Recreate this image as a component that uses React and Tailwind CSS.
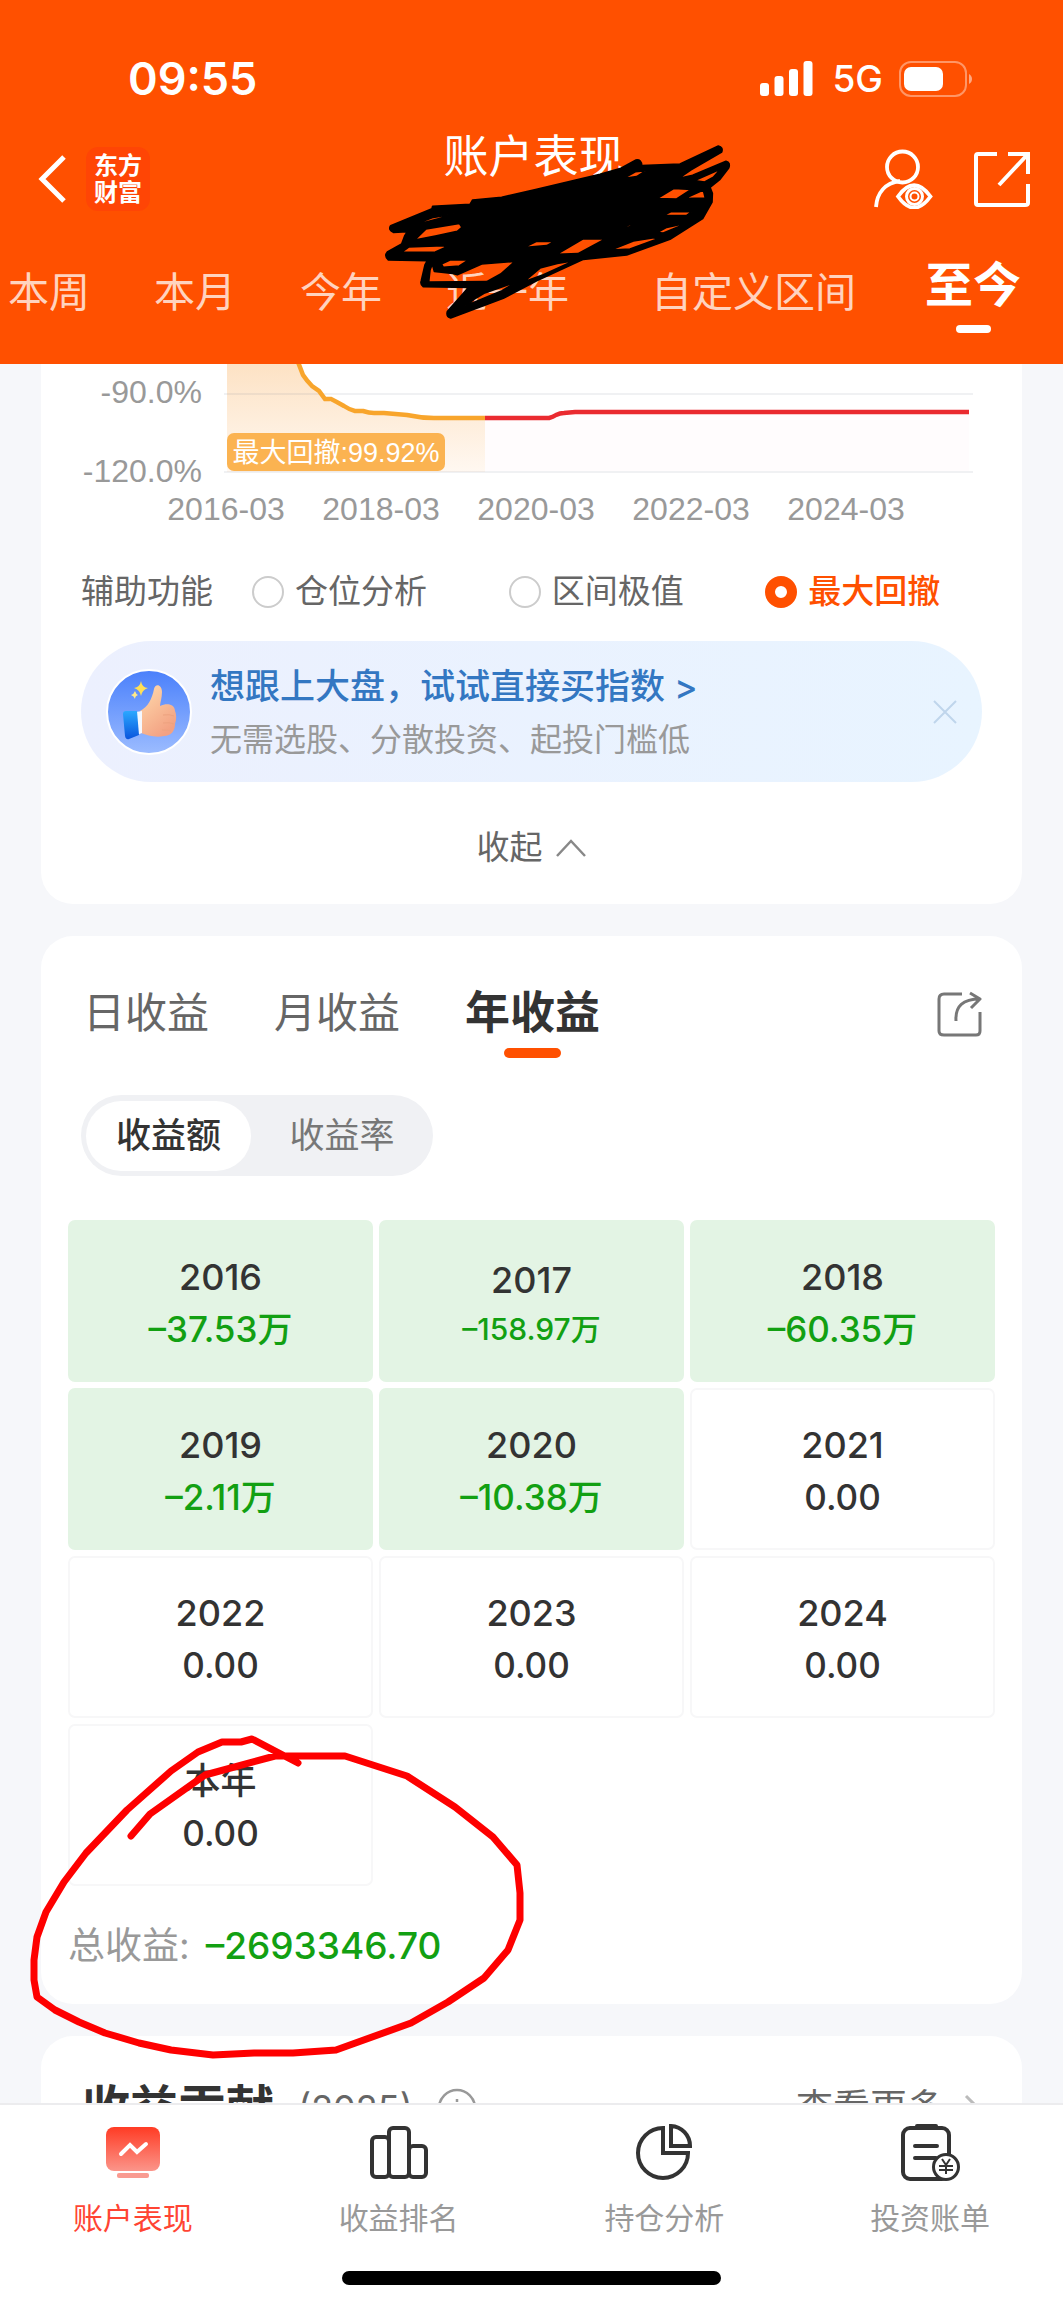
import { useState } from 'react';
import clsx from 'clsx';

const RANGES = [
  { label: '本周', width: 'w-[146px]' },
  { label: '本月', width: 'w-[146px]' },
  { label: '今年', width: 'w-[146px]' },
  { label: '近一年', width: 'w-[187px]' },
  { label: '自定义区间', width: 'w-[305px]' },
  { label: '至今', width: 'w-[134px]' },
];

const HELPERS = ['仓位分析', '区间极值', '最大回撤'];

const YEARS = [
  { year: '2016', value: '–37.53万', loss: true },
  { year: '2017', value: '–158.97万', loss: true, long: true },
  { year: '2018', value: '–60.35万', loss: true },
  { year: '2019', value: '–2.11万', loss: true },
  { year: '2020', value: '–10.38万', loss: true },
  { year: '2021', value: '0.00' },
  { year: '2022', value: '0.00' },
  { year: '2023', value: '0.00' },
  { year: '2024', value: '0.00' },
  { year: '本年', value: '0.00' },
];

function StatusBar() {
  return (
    <div className="flex h-[58px] items-center justify-between pl-[128px] pr-[88px]">
      <span className="text-[45px] font-semibold">09:55</span>
      <div className="flex items-center">
        <svg className="h-9 w-[54px]" viewBox="0 0 54 36" fill="currentColor">
          <rect x="0" y="22" width="9" height="13" rx="3" />
          <rect x="14.500" y="15" width="9" height="20" rx="3" />
          <rect x="29" y="8" width="9" height="27" rx="3" />
          <rect x="43.500" y="0" width="9" height="35" rx="3" />
        </svg>
        <span className="ml-[18px] text-[37px] font-medium">5G</span>
        <svg className="ml-4 h-9 w-[76px]" viewBox="0 0 76 36">
          <rect x="1" y="1" width="66" height="34" rx="11" fill="none" stroke="#fff" strokeOpacity="0.4" strokeWidth="2" />
          <rect x="5" y="6" width="39" height="24" rx="7" fill="#fff" />
          <path d="M70 13c4 2 4 8 0 10z" fill="#fff" fillOpacity="0.5" />
        </svg>
      </div>
    </div>
  );
}

// Black marker over the account name
function Redaction() {
  return (
    <svg
      className="pointer-events-none absolute left-1/2 top-[130px] h-[200px] w-[370px] -translate-x-[162px]"
      viewBox="0 0 1110 600"
      stroke="#000"
      strokeWidth="5"
      strokeLinejoin="round"
    >
      <path
        fillRule="evenodd"
        d="M188 229L300 223L308 210L395 202L500 178L690 133L750 116L798 90Q815 88 815 107L930 102L1045 48Q1060 52 1055 66L962 120L925 146L968 136L1068 94Q1082 98 1076 114L1050 148L1020 172L1027 190L1026 216L998 266L900 328L770 375L640 388L500 452L400 505L242 564Q228 560 232 545L296 472L160 470Q150 464 154 452L165 405L172 392L55 390Q42 378 52 366L95 342L104 318L112 305L70 307Q54 300 62 287L186 236Z
        M122 288L190 262L262 250L208 266Z
        M134 330L168 297L268 280L276 292L262 304L196 318Z
        M94 367L116 351L220 347L228 352L196 366Z
        M214 402L240 390L296 390L268 408L220 412Z
        M187 402L193 424L248 430L262 434L335 402L435 394L392 432L350 455L176 456L180 420Z
        M282 532L312 508L342 490L442 455L396 482L300 522Z
        M460 456L510 414L562 400L612 392L520 434Z
        M460 353L500 334L555 334L530 347Z
        M560 373L638 327L706 327L624 371Z
        M722 360L790 333L852 323L860 328L780 357Z
        M520 286L560 268L542 280Z
        M362 264L368 258L378 258L368 264Z
        M746 293L780 284L804 286L766 293Z
        M826 280L868 275L840 280Z
        M860 206L912 175L964 178L920 207Z
        M942 206L1000 180L1006 204Z
        M878 257L902 245L966 245L950 256Z
        M860 308L890 292L955 278L880 309Z
        M968 234L978 230L970 240Z
        M972 152L1052 117L1030 142L1004 156Z
        M758 146L796 125L828 122L800 140Z"
      />
    </svg>
  );
}

function Header() {
  const [active, setActive] = useState('至今');

  return (
    <header className="relative shrink-0 overflow-hidden bg-[#ff5000] pt-[50px] text-white">
      <StatusBar />

      <div className="mt-[26px] grid h-[90px] grid-cols-[1fr_auto_1fr] items-center pl-9 pr-8">
        <div className="flex items-center">
          <button type="button" aria-label="返回" className="h-12 w-8">
            <svg viewBox="0 0 32 48" fill="none" stroke="currentColor" strokeWidth="5">
              <path d="M28 2L6 24l22 22" />
            </svg>
          </button>
          <div className="ml-[18px] flex h-16 w-16 flex-col items-center justify-center rounded-xl bg-[#ff4505] text-[24px] font-bold leading-[27px]">
            <span>东方</span>
            <span>财富</span>
          </div>
        </div>
        <h1 className="self-start text-[45px] font-normal leading-[46px]">账户表现</h1>
        <div className="flex items-center justify-end gap-10">
          <button type="button" aria-label="账户可见" className="h-[60px] w-[60px]">
            <svg viewBox="0 0 60 60" fill="none" stroke="currentColor" strokeWidth="3.800">
              <circle cx="29.500" cy="18" r="15.500" />
              <path d="M27 32C12 34 4 44 3 58" />
              <path d="M25 47.500Q41 25 57.500 47.500Q41 70 25 47.500Z" />
              <circle cx="41.500" cy="47.500" r="8" strokeWidth="3" />
              <circle cx="41.500" cy="47.500" r="4" strokeWidth="2" />
            </svg>
          </button>
          <button type="button" aria-label="分享" className="h-[58px] w-[58px]">
            <svg viewBox="0 0 58 58" fill="none" stroke="currentColor" strokeWidth="4">
              <path d="M24 4H5q-2 0-2 2v47q0 2 2 2h47q3 0 3-2V34" />
              <path d="M35 4h20v20M55 4L26 35" />
            </svg>
          </button>
        </div>
      </div>

      <nav className="-ml-6 flex h-[140px] items-start pt-[38px]">
        {RANGES.map(({ label, width }) => (
          <button
            key={label}
            type="button"
            onClick={() => setActive(label)}
            className={clsx('flex shrink-0 flex-col items-center whitespace-nowrap', width)}
          >
            {active === label ? (
              <>
                <span className="text-[48px] font-bold leading-[46px]">{label}</span>
                <span className="mt-[17px] h-2 w-[35px] rounded-full bg-white" />
              </>
            ) : (
              <span className="text-[41px] leading-[60px] text-white/75">{label}</span>
            )}
          </button>
        ))}
      </nav>

      <Redaction />
    </header>
  );
}

function DrawdownChart() {
  return (
    <svg className="block w-full font-['Liberation_Sans','Noto_Sans_CJK_SC',sans-serif]" viewBox="0 0 981 178">
      <defs>
        <linearGradient id="drawdown" x1="0" y1="0" x2="0" y2="1">
          <stop offset="0" stopColor="#fde2c4" />
          <stop offset="1" stopColor="#fff8f1" />
        </linearGradient>
      </defs>
      <path d="M186 0H257L262 12L271 22L283 35L311 46L366 51L393 54H444V108H186Z" fill="url(#drawdown)" />
      <path d="M444 54H508L534 48H928V107H444Z" fill="#fffcfd" />
      <path d="M183 30H932M183 108H932" stroke="#8088a0" strokeOpacity="0.12" strokeWidth="2" />
      <path
        d="M257 -2L262 11Q266 17 271 22L278 27L284 35H290Q296 38 303 42Q309 46 314 47L322 47Q328 49 333 49H343L366 51Q380 54 393 54H444"
        fill="none"
        stroke="#f8a52c"
        strokeWidth="4.500"
      />
      <path d="M444 54H508Q512 53 515 51Q519 49 523 49L534 48H928" fill="none" stroke="#ea2b30" strokeWidth="4.500" />
      <rect x="186" y="69" width="218" height="38" rx="7" fill="#fbb351" />
      <text x="295" y="98" fontSize="27" fill="#fff" textAnchor="middle">最大回撤:99.92%</text>
      <g fontSize="32" fill="#999">
        <text x="161" y="39" textAnchor="end">-90.0%</text>
        <text x="161" y="118" textAnchor="end">-120.0%</text>
        <text x="185" y="156" textAnchor="middle">2016-03</text>
        <text x="340" y="156" textAnchor="middle">2018-03</text>
        <text x="495" y="156" textAnchor="middle">2020-03</text>
        <text x="650" y="156" textAnchor="middle">2022-03</text>
        <text x="805" y="156" textAnchor="middle">2024-03</text>
      </g>
    </svg>
  );
}

function ThumbIcon() {
  return (
    <svg className="h-[86px] w-[86px] shrink-0" viewBox="0 0 86 86">
      <defs>
        <linearGradient id="disc" x1="0" y1="0" x2="0" y2="1">
          <stop offset="0" stopColor="#4a80fb" />
          <stop offset="1" stopColor="#9cbcff" />
        </linearGradient>
        <linearGradient id="hand" x1="0" y1="0" x2="0.600" y2="1">
          <stop offset="0" stopColor="#ffdcae" />
          <stop offset="1" stopColor="#f3a182" />
        </linearGradient>
        <linearGradient id="cuff" x1="0" y1="0" x2="0" y2="1">
          <stop offset="0" stopColor="#2ba8ff" />
          <stop offset="1" stopColor="#0a55dd" />
        </linearGradient>
      </defs>
      <circle cx="43" cy="43" r="42" fill="url(#disc)" stroke="#fff" strokeWidth="2" />
      <path
        d="M34 42C42 38 46 30 48 20C49 14 56 15 56 23C56 29 54 34 54 37C62 33 69 36 69 42C71 47 70 52 69 55C69 62 65 67 58 67C49 69 41 66 35 64Z"
        fill="url(#hand)"
      />
      <path d="M57 46q7-1 11 1M57 54q7-1 11 1M56 61q6 0 9 1" stroke="#eda27f" strokeWidth="1" fill="none" />
      <path d="M30 43l6-1 0 22-5 2z" fill="#f4f8ff" />
      <path d="M17 45q0-3 3-3l11 0 2 24-10 4q-3 1-4-3z" fill="url(#cuff)" />
      <path d="M35 12q1 7 7 7-6 2-7 8-1-6-7-8 6-1 7-7z" fill="#ffdf55" />
      <path d="M29 22q1 3 3 4-3 1-3 4-1-3-4-4 3-1 4-4z" fill="#ffe98a" />
    </svg>
  );
}

function ChartCard() {
  const [helper, setHelper] = useState('最大回撤');

  return (
    <section className="shrink-0 rounded-b-[32px] bg-white">
      <DrawdownChart />

      <fieldset className="flex h-[99px] items-center pl-10 text-[33px] text-[#666]">
        <span className="w-[171px] shrink-0">辅助功能</span>
        {HELPERS.map((name) => (
          <label
            key={name}
            className={clsx('flex flex-1 items-center gap-[11px]', helper === name && 'font-medium text-[#ff5000]')}
          >
            <input
              type="radio"
              name="helper"
              checked={helper === name}
              onChange={() => setHelper(name)}
              className="h-8 w-8 appearance-none rounded-full border-2 border-[#ccc] checked:border-[10px] checked:border-[#ff5000]"
            />
            {name}
          </label>
        ))}
      </fieldset>

      <div className="mx-10 flex h-[141px] items-center rounded-full bg-linear-to-r from-[#ecf0fe] to-[#e8f4ff] pl-[25px] pr-[23px]">
        <ThumbIcon />
        <a href="#index" className="ml-[18px] flex-1 pt-[2px]">
          <p className="text-[35px] font-medium leading-[54px] text-[#3377c2]">想跟上大盘，试试直接买指数 &gt;</p>
          <p className="text-[32px] leading-[54px] text-[#999]">无需选股、分散投资、起投门槛低</p>
        </a>
        <button type="button" aria-label="关闭" className="h-7 w-7">
          <svg viewBox="0 0 28 28" stroke="#bfd5ec" strokeWidth="2">
            <path d="M3 3l22 22M25 3L3 25" />
          </svg>
        </button>
      </div>

      <button type="button" className="mx-auto mt-[10px] flex h-[112px] items-center gap-3 text-[33px] text-[#666]">
        收起
        <svg className="h-5 w-8" viewBox="0 0 32 20" fill="none" stroke="#888" strokeWidth="2.500">
          <path d="M2 18L16 3l14 15" />
        </svg>
      </button>
    </section>
  );
}

function YearCell({ year, value, loss, long }) {
  return (
    <li
      className={clsx(
        'flex h-[162px] flex-col items-center justify-center rounded-[7px] pt-[3px] font-medium text-[#333]',
        loss ? 'bg-[#e3f4e4]' : 'border-2 border-[#f7f7f8]'
      )}
    >
      <span className="text-[36px] leading-[52px]">{year}</span>
      <span className={clsx(long ? 'text-[30px] leading-[46px]' : 'text-[35px] leading-[52px]', loss && 'text-[#12a012]')}>
        {value}
      </span>
    </li>
  );
}

// Red pen circle round the total
function PenCircle() {
  return (
    <svg
      className="pointer-events-none absolute -left-[11px] top-[794px] z-10 h-[335px] w-[500px]"
      viewBox="30 1730 500 335"
      fill="none"
      stroke="#fe0000"
      strokeWidth="7"
      strokeLinecap="round"
      strokeLinejoin="round"
    >
      <path d="M131 1836L150 1814L205 1775L275 1756H345L407 1776L455 1807L493 1837L517 1865L520 1893V1920L508 1950L484 1978L448 2002L411 2023L336 2050L293 2053H254L213 2055L171 2050L139 2043L105 2033L79 2022L55 2010L37 1997L34 1980V1960L37 1937L46 1912L64 1882L86 1853L127 1810L171 1771L198 1752L222 1742H241L252 1739L298 1763" />
    </svg>
  );
}

function ProfitCard() {
  const [period, setPeriod] = useState('年收益');
  const [mode, setMode] = useState('收益额');

  return (
    <section className="relative shrink-0 rounded-[32px] bg-white px-[27px] pb-[30px] pt-[49px]">
      <div className="flex items-start justify-between pl-[15px] pr-[12px]">
        <div className="flex gap-[65px]">
          {['日收益', '月收益', '年收益'].map((name) => (
            <button
              key={name}
              type="button"
              onClick={() => setPeriod(name)}
              className={clsx(
                'flex h-[73px] flex-col items-center leading-[56px]',
                period === name ? 'text-[45px] font-bold text-[#333]' : 'text-[42px] text-[#666]'
              )}
            >
              {name}
              {period === name && <span className="mt-[7px] h-[10px] w-[57px] rounded-full bg-[#ff5000]" />}
            </button>
          ))}
        </div>
        <button type="button" aria-label="分享收益" className="mt-1 h-12 w-12">
          <svg viewBox="0 0 48 48" fill="none" stroke="#777" strokeWidth="3" strokeLinejoin="round">
            <path d="M27 5H9q-5 0-5 5v32q0 4 5 4h32q4 0 4-4V23" />
            <path d="M21 32C20 17 28 10 45 10M35 4l10 6-9 9" />
          </svg>
        </button>
      </div>

      <div className="ml-[13px] mt-[37px] flex h-[81px] w-fit items-center rounded-full bg-[#f0f1f4] pl-[5px] text-[35px]">
        {['收益额', '收益率'].map((name) => (
          <button
            key={name}
            type="button"
            onClick={() => setMode(name)}
            className={clsx(
              'h-[70px] rounded-full',
              name === '收益额' ? 'w-[165px]' : 'w-[182px]',
              mode === name ? 'bg-white font-medium text-[#333]' : 'text-[#777]'
            )}
          >
            {name}
          </button>
        ))}
      </div>

      <ul className="mt-11 grid grid-cols-3 gap-[6px]">
        {YEARS.map((item) => (
          <YearCell key={item.year} {...item} />
        ))}
      </ul>

      <p className="mt-8 flex items-center gap-4 text-[37px] leading-[56px]">
        <span className="text-[#999]">总收益:</span>
        <span className="font-medium text-[#12a012]">–2693346.70</span>
      </p>

      <PenCircle />
    </section>
  );
}

function ContributionCard() {
  return (
    <section className="flex h-[200px] shrink-0 items-start justify-between rounded-[32px] bg-white pl-[41px] pr-[42px] pt-11 leading-[56px] text-[#666]">
      <div className="flex items-center">
        <h2 className="text-[48px] font-bold text-[#333]">收益贡献</h2>
        <span className="ml-6 text-[36px]">(2025)</span>
        <svg className="ml-6 h-10 w-10" viewBox="0 0 40 40" fill="none" stroke="#999" strokeWidth="2.500">
          <circle cx="20" cy="20" r="18" />
          <path d="M20 17v13M20 11v3" />
        </svg>
      </div>
      <a href="#more" className="flex items-center gap-5 text-[37px]">
        查看更多
        <svg className="h-7 w-4" viewBox="0 0 16 28" fill="none" stroke="#bbb" strokeWidth="3">
          <path d="M2 2l12 12L2 26" />
        </svg>
      </a>
    </section>
  );
}

const TABS = [
  {
    label: '账户表现',
    icon: (
      <>
        <defs>
          <linearGradient id="screen" x1="0" y1="0" x2="0" y2="1">
            <stop offset="0" stopColor="#ff3b24" />
            <stop offset="1" stopColor="#fb958a" />
          </linearGradient>
        </defs>
        <rect x="3" y="6" width="54" height="44" rx="8" fill="url(#screen)" />
        <rect x="14" y="52" width="32" height="5" rx="2" fill="#f99b91" />
        <path d="M18 33L27 24L34 31L43 23" stroke="#fff" strokeWidth="4" strokeLinecap="round" />
      </>
    ),
  },
  {
    label: '收益排名',
    icon: (
      <g stroke="#333" strokeWidth="4">
        <rect x="3" y="16" width="17" height="40" rx="4" />
        <rect x="20" y="7" width="20" height="49" rx="4" />
        <rect x="40" y="25" width="17" height="31" rx="4" />
      </g>
    ),
  },
  {
    label: '持仓分析',
    icon: (
      <g stroke="#333" strokeWidth="4">
        <path d="M29 7A25 25 0 1 0 54 32H29Z" />
        <path d="M37 5V25H56A20 20 0 0 0 37 5Z" />
      </g>
    ),
  },
  {
    label: '投资账单',
    icon: (
      <g stroke="#333" strokeWidth="4">
        <rect x="3" y="7" width="46" height="51" rx="7" />
        <path d="M17 5H36M15 25H37M15 37H36" strokeLinecap="round" />
        <circle cx="46" cy="46" r="12.500" fill="#fff" strokeWidth="3" />
        <path d="M42 38l4 6 4-6M46 44v9M39 45h14M39 49h14" strokeWidth="2" />
      </g>
    ),
  },
];

function BottomNav() {
  const [tab, setTab] = useState('账户表现');

  return (
    <footer className="flex h-[203px] shrink-0 flex-col items-center border-t-2 border-[#ececee] bg-white">
      <nav className="grid w-full grid-cols-4 pt-4">
        {TABS.map(({ label, icon }) => (
          <button key={label} type="button" onClick={() => setTab(label)} className="flex flex-col items-center">
            <svg className="h-[60px] w-[60px]" viewBox="0 0 60 60" fill="none">
              {icon}
            </svg>
            <span
              className={clsx('mt-[17px] text-[30px] leading-10', tab === label ? 'text-[#ff4433]' : 'text-[#999]')}
            >
              {label}
            </span>
          </button>
        ))}
      </nav>
      <div className="mt-[33px] h-[14px] w-[379px] rounded-full bg-black" />
    </footer>
  );
}

export default function App() {
  return (
    <div className="flex h-screen flex-col bg-[#f6f7fa] font-['Inter','Noto_Sans_CJK_SC',sans-serif]">
      <Header />
      <main className="flex min-h-0 flex-1 flex-col gap-8 overflow-hidden px-[41px]">
        <ChartCard />
        <ProfitCard />
        <ContributionCard />
      </main>
      <BottomNav />
    </div>
  );
}
